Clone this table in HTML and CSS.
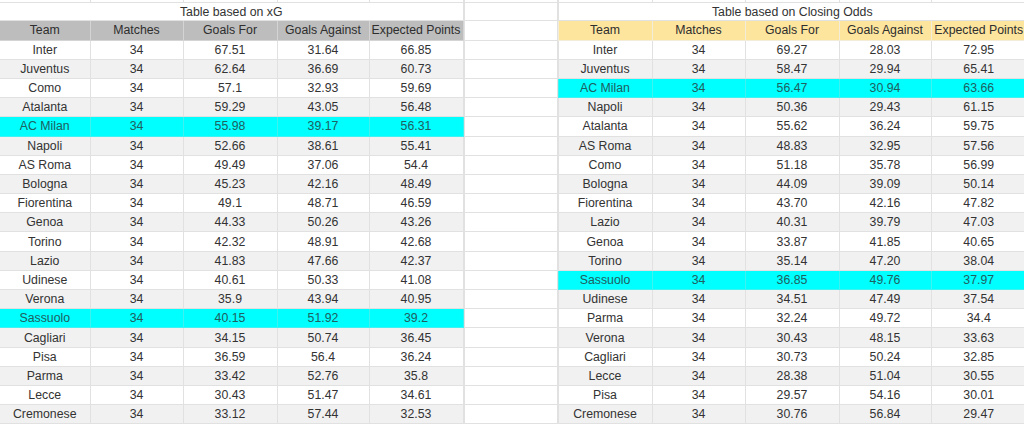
FILE: index.html
```html
<!DOCTYPE html>
<html>
<head>
<meta charset="utf-8">
<link rel="stylesheet" href="styles.css">
</head>
<body>
<div class="sheet">
  <table class="tbl left">
    <colgroup><col class="c90"><col class="c93"><col class="c94"><col class="c92"><col class="c94"></colgroup>
    <tr class="top"><td></td><td></td><td></td><td></td><td></td></tr>
    <tr class="title"><td colspan="5">Table based on xG</td></tr>
    <tr class="head grey"><td>Team</td><td>Matches</td><td>Goals For</td><td>Goals Against</td><td>Expected Points</td></tr>
    <tr class="row"><td>Inter</td><td>34</td><td>67.51</td><td>31.64</td><td>66.85</td></tr>
    <tr class="row alt"><td>Juventus</td><td>34</td><td>62.64</td><td>36.69</td><td>60.73</td></tr>
    <tr class="row"><td>Como</td><td>34</td><td>57.1</td><td>32.93</td><td>59.69</td></tr>
    <tr class="row alt"><td>Atalanta</td><td>34</td><td>59.29</td><td>43.05</td><td>56.48</td></tr>
    <tr class="row hl"><td>AC Milan</td><td>34</td><td>55.98</td><td>39.17</td><td>56.31</td></tr>
    <tr class="row alt"><td>Napoli</td><td>34</td><td>52.66</td><td>38.61</td><td>55.41</td></tr>
    <tr class="row"><td>AS Roma</td><td>34</td><td>49.49</td><td>37.06</td><td>54.4</td></tr>
    <tr class="row alt"><td>Bologna</td><td>34</td><td>45.23</td><td>42.16</td><td>48.49</td></tr>
    <tr class="row"><td>Fiorentina</td><td>34</td><td>49.1</td><td>48.71</td><td>46.59</td></tr>
    <tr class="row alt"><td>Genoa</td><td>34</td><td>44.33</td><td>50.26</td><td>43.26</td></tr>
    <tr class="row"><td>Torino</td><td>34</td><td>42.32</td><td>48.91</td><td>42.68</td></tr>
    <tr class="row alt"><td>Lazio</td><td>34</td><td>41.83</td><td>47.66</td><td>42.37</td></tr>
    <tr class="row"><td>Udinese</td><td>34</td><td>40.61</td><td>50.33</td><td>41.08</td></tr>
    <tr class="row alt"><td>Verona</td><td>34</td><td>35.9</td><td>43.94</td><td>40.95</td></tr>
    <tr class="row hl"><td>Sassuolo</td><td>34</td><td>40.15</td><td>51.92</td><td>39.2</td></tr>
    <tr class="row alt"><td>Cagliari</td><td>34</td><td>34.15</td><td>50.74</td><td>36.45</td></tr>
    <tr class="row"><td>Pisa</td><td>34</td><td>36.59</td><td>56.4</td><td>36.24</td></tr>
    <tr class="row alt"><td>Parma</td><td>34</td><td>33.42</td><td>52.76</td><td>35.8</td></tr>
    <tr class="row"><td>Lecce</td><td>34</td><td>30.43</td><td>51.47</td><td>34.61</td></tr>
    <tr class="row alt"><td>Cremonese</td><td>34</td><td>33.12</td><td>57.44</td><td>32.53</td></tr>
  </table>
  <table class="tbl gap">
    <colgroup><col class="c93"></colgroup>
    <tr class="top"><td></td></tr>
    <tr class="title"><td></td></tr>
    <tr class="head"><td></td></tr>
    <tr class="row"><td></td></tr><tr class="row"><td></td></tr><tr class="row"><td></td></tr><tr class="row"><td></td></tr>
    <tr class="row"><td></td></tr><tr class="row"><td></td></tr><tr class="row"><td></td></tr><tr class="row"><td></td></tr>
    <tr class="row"><td></td></tr><tr class="row"><td></td></tr><tr class="row"><td></td></tr><tr class="row"><td></td></tr>
    <tr class="row"><td></td></tr><tr class="row"><td></td></tr><tr class="row"><td></td></tr><tr class="row"><td></td></tr>
    <tr class="row"><td></td></tr><tr class="row"><td></td></tr><tr class="row"><td></td></tr><tr class="row"><td></td></tr>
  </table>
  <table class="tbl right">
    <colgroup><col class="c94"><col class="c93"><col class="c94"><col class="c92"><col class="c95"></colgroup>
    <tr class="top"><td></td><td></td><td></td><td></td><td></td></tr>
    <tr class="title"><td colspan="5">Table based on Closing Odds</td></tr>
    <tr class="head gold"><td>Team</td><td>Matches</td><td>Goals For</td><td>Goals Against</td><td>Expected Points</td></tr>
    <tr class="row"><td>Inter</td><td>34</td><td>69.27</td><td>28.03</td><td>72.95</td></tr>
    <tr class="row alt"><td>Juventus</td><td>34</td><td>58.47</td><td>29.94</td><td>65.41</td></tr>
    <tr class="row hl"><td>AC Milan</td><td>34</td><td>56.47</td><td>30.94</td><td>63.66</td></tr>
    <tr class="row alt"><td>Napoli</td><td>34</td><td>50.36</td><td>29.43</td><td>61.15</td></tr>
    <tr class="row"><td>Atalanta</td><td>34</td><td>55.62</td><td>36.24</td><td>59.75</td></tr>
    <tr class="row alt"><td>AS Roma</td><td>34</td><td>48.83</td><td>32.95</td><td>57.56</td></tr>
    <tr class="row"><td>Como</td><td>34</td><td>51.18</td><td>35.78</td><td>56.99</td></tr>
    <tr class="row alt"><td>Bologna</td><td>34</td><td>44.09</td><td>39.09</td><td>50.14</td></tr>
    <tr class="row"><td>Fiorentina</td><td>34</td><td>43.70</td><td>42.16</td><td>47.82</td></tr>
    <tr class="row alt"><td>Lazio</td><td>34</td><td>40.31</td><td>39.79</td><td>47.03</td></tr>
    <tr class="row"><td>Genoa</td><td>34</td><td>33.87</td><td>41.85</td><td>40.65</td></tr>
    <tr class="row alt"><td>Torino</td><td>34</td><td>35.14</td><td>47.20</td><td>38.04</td></tr>
    <tr class="row hl"><td>Sassuolo</td><td>34</td><td>36.85</td><td>49.76</td><td>37.97</td></tr>
    <tr class="row alt"><td>Udinese</td><td>34</td><td>34.51</td><td>47.49</td><td>37.54</td></tr>
    <tr class="row"><td>Parma</td><td>34</td><td>32.24</td><td>49.72</td><td>34.4</td></tr>
    <tr class="row alt"><td>Verona</td><td>34</td><td>30.43</td><td>48.15</td><td>33.63</td></tr>
    <tr class="row"><td>Cagliari</td><td>34</td><td>30.73</td><td>50.24</td><td>32.85</td></tr>
    <tr class="row alt"><td>Lecce</td><td>34</td><td>28.38</td><td>51.04</td><td>30.55</td></tr>
    <tr class="row"><td>Pisa</td><td>34</td><td>29.57</td><td>54.16</td><td>30.01</td></tr>
    <tr class="row alt"><td>Cremonese</td><td>34</td><td>30.76</td><td>56.84</td><td>29.47</td></tr>
  </table>
</div>
</body>
</html>
```

FILE: styles.css
```css
html, body {
  margin: 0;
  padding: 0;
  background: #ffffff;
}

body {
  font-family: "Liberation Sans", Arial, sans-serif;
  font-size: 12.3px;
  color: #333333;
}

.sheet {
  display: flex;
  width: 1024px;
  align-items: flex-start;
}

.tbl {
  border-collapse: collapse;
  table-layout: fixed;
  flex: none;
}

.left { width: 463px; }
.gap { width: 93px; }
.right { width: 468px; }

.c90 { width: 90px; }
.c92 { width: 92px; }
.c93 { width: 93px; }
.c94 { width: 94px; }
.c95 { width: 95px; }

.tbl td {
  padding: 0;
  border: 1px solid #e1e1e1;
  text-align: center;
  white-space: nowrap;
  overflow: hidden;
  line-height: 14px;
}

.left td:first-child {
  border-left: none;
}

.right td:last-child {
  border-right: none;
}

.top td {
  border-top: none;
  height: 2px;
  line-height: 0;
  font-size: 0;
}

.top { height: 2px; }
.title { height: 18px; }
.head { height: 19.6px; }
.row { height: 19.2px; }

.title td {
  color: #333333;
}

.grey td {
  background: #bdbdbd;
  border-color: #d4d4d4;
  color: #2e2e2e;
}

.gold td {
  background: #fde59e;
  border-color: #f3ecd8;
  color: #2e2e2e;
}

.alt td {
  background: #f1f1f1;
}

.hl td {
  background: #00ffff;
  border-color: #3ef2f2;
  color: #1f6060;
}
```
